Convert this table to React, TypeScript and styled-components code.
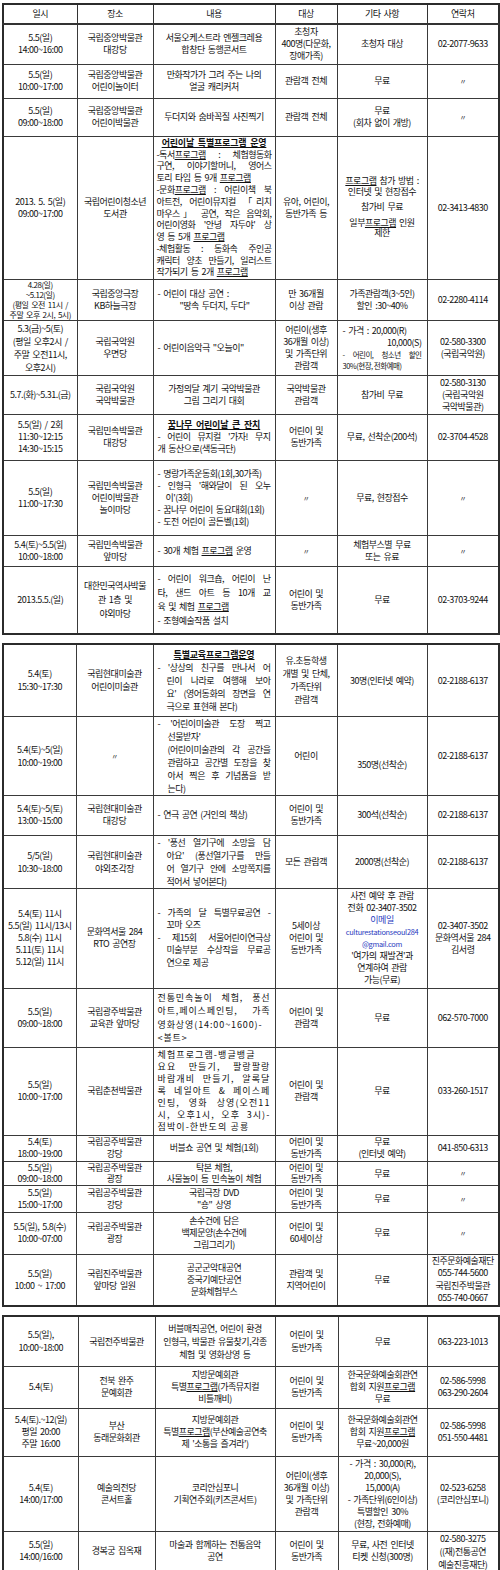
import React, { ReactNode } from "react";
import styled, { createGlobalStyle } from "styled-components";

const GlobalStyle = createGlobalStyle`
  html, body {
    margin: 0;
    padding: 0;
    background: #ffffff;
  }
`;

const Page = styled.div`
  width: 500px;
  box-sizing: border-box;
  padding: 3px 0 4px 2px;
  display: flex;
  flex-direction: column;
  gap: 8px;
  font-family: "Noto Sans CJK KR", "Noto Sans", sans-serif;
  color: #111;
`;

const Table = styled.table`
  width: 496px;
  table-layout: fixed;
  border-collapse: collapse;
  border: 2px solid #2b2b2b;
  font-size: 9px;
  letter-spacing: -0.5px;
  word-spacing: 1.5px;
`;

const Col = styled.col<{ $w: number }>`
  width: ${(p) => p.$w}px;
`;

const Tr = styled.tr<{ $h: number }>`
  height: ${(p) => p.$h}px;
`;

const Th = styled.th`
  border: 1px solid #333;
  border-bottom: 2px solid #333;
  font-weight: normal;
  line-height: 12px;
  padding: 0 2px;
`;

const Td = styled.td<{ $align: string; $lh: number; $pad: string; $ls?: number; $fs?: number }>`
  border: 1px solid #3a3a3a;
  padding: ${(p) => p.$pad};
  text-align: ${(p) => p.$align};
  vertical-align: middle;
  line-height: ${(p) => p.$lh}px;
  font-size: ${(p) => (p.$fs !== undefined ? `${p.$fs}px` : "inherit")};
  letter-spacing: ${(p) => (p.$ls !== undefined ? `${p.$ls}px` : "inherit")};
  word-spacing: ${(p) => (p.$ls !== undefined ? "0" : "inherit")};
  overflow: hidden;
`;

const Title = styled.span`
  display: block;
  font-weight: bold;
  text-decoration: underline;
  text-align: center;
  letter-spacing: -0.2px;
  word-spacing: 2px;
`;

const U = styled.span`
  text-decoration: underline;
`;

const J = styled.span<{ $in?: number }>`
  display: block;
  text-align: justify;
  text-align-last: justify;
  padding-left: ${(p) => p.$in ?? 0}px;
`;

const L = styled.span<{ $in?: number }>`
  display: block;
  text-align: left;
  padding-left: ${(p) => p.$in ?? 0}px;
`;

const R = styled.span`
  display: block;
  text-align: right;
`;

const Small = styled.span`
  display: block;
  font-size: 7.5px;
  line-height: 11px;
  word-spacing: 0;
`;

const Gap = styled.span`
  display: block;
  height: 5px;
`;

const Ditto = styled.span`
  font-size: 7px;
`;

const Mail = styled.span`
  color: #2a3cc0;
`;

const MailAddr = styled.span`
  font-size: 7.4px;
  letter-spacing: -0.3px;
`;

type CellSpec =
  | string
  | {
      t: ReactNode;
      a?: "left" | "center" | "justify";
      lh?: number;
      pad?: string;
      ls?: number;
      fs?: number;
    };

type RowSpec = { h: number; lh?: number; cells: CellSpec[] };

const br = (s: string) =>
  s.split("\n").map((l, i) => (
    <React.Fragment key={i}>
      {i > 0 && <br />}
      {l}
    </React.Fragment>
  ));

const D: CellSpec = { t: <Ditto>〃</Ditto> };

const headers = ["일시", "장소", "내용", "대상", "기타 사항", "연락처"];

const table1: RowSpec[] = [
  {
    h: 40,
    cells: [
      "5.5(일)\n14:00~16:00",
      "국립중앙박물관\n대강당",
      "서울오케스트라 엔젤크레용\n합창단 동행콘서트",
      "초청자\n400명(다문화,\n장애가족)",
      "초청자 대상",
      "02-2077-9633",
    ],
  },
  {
    h: 34,
    cells: [
      "5.5(일)\n10:00~17:00",
      "국립중앙박물관\n어린이놀이터",
      "만화작가가 그려 주는 나의\n얼굴 캐리커처",
      "관람객 전체",
      "무료",
      D,
    ],
  },
  {
    h: 38,
    cells: [
      "5.5(일)\n09:00~18:00",
      "국립중앙박물관\n어린이박물관",
      "두더지와 숨바꼭질 사진찍기",
      "관람객 전체",
      "무료\n(회차 없이 개방)",
      D,
    ],
  },
  {
    h: 143,
    cells: [
      "2013. 5. 5(일)\n09:00~17:00",
      "국립어린이청소년\n도서관",
      {
        lh: 11.8,
        pad: "0 3px",
        t: (
          <>
            <Title>어린이날 특별프로그램 운영</Title>
            <J>-독서<U>프로그램</U> : 체험형동화</J>
            <J>구연, 이야기할머니, 영어스</J>
            <L>토리 타임 등 9개 <U>프로그램</U></L>
            <J>-문화<U>프로그램</U> : 어린이책 북</J>
            <J>아트전, 어린이뮤지컬 「리치</J>
            <J>마우스」 공연, 작은 음악회,</J>
            <J>어린이영화 '안녕 자두야' 상</J>
            <L>영 등 5개 <U>프로그램</U></L>
            <J>-체험활동 : 동화속 주인공</J>
            <J>캐릭터 양초 만들기, 일러스트</J>
            <L>작가되기 등 2개 <U>프로그램</U></L>
          </>
        ),
      },
      "유아, 어린이,\n동반가족 등",
      {
        lh: 10.5,
        t: (
          <>
            <U>프로그램</U> 참가 방법 :<br />
            인터넷 및 현장접수
            <Gap />
            참가비 무료
            <Gap />
            일부<U>프로그램</U> 인원
            <br />
            제한
          </>
        ),
      },
      "02-3413-4830",
    ],
  },
  {
    h: 40,
    cells: [
      {
        t: "4.28(일)\n~5.12(일)\n(평일 오전 11시 /\n주말 오후 2시, 5시)",
        lh: 10,
        fs: 8,
        pad: "0 1px",
      },
      "국립중앙극장\nKB하늘극장",
      {
        a: "left",
        pad: "0 4px",
        t: (
          <>
            <L>- 어린이 대상 공연 :</L>
            <L $in={22}>"땅속 두더지, 두다"</L>
          </>
        ),
      },
      "만 36개월\n이상 관람",
      "가족관람객(3~5인)\n할인 :30~40%",
      "02-2280-4114",
    ],
  },
  {
    h: 55,
    cells: [
      { t: "5.3(금)~5(토)\n(평일 오후2시 /\n주말 오전11시,\n오후2시)", lh: 13 },
      "국립국악원\n우면당",
      { t: '- 어린이음악극 "오늘이"', a: "left", pad: "0 4px" },
      "어린이(생후\n36개월 이상)\n및 가족단위\n관람객",
      {
        a: "left",
        pad: "0 5px",
        t: (
          <>
            <L>- 가격 : 20,000(R)</L>
            <R>10,000(S)</R>
            <Small>
              <J>- 어린이, 청소년 할인</J>
              <L>30%(현장, 전화예매)</L>
            </Small>
          </>
        ),
      },
      "02-580-3300\n(국립국악원)",
    ],
  },
  {
    h: 39,
    cells: [
      "5.7.(화)~5.31.(금)",
      "국립국악원\n국악박물관",
      "가정의달 계기 국악박물관\n그림 그리기 대회",
      "국악박물관\n관람객",
      "참가비 무료",
      "02-580-3130\n(국립국악원\n국악박물관)",
    ],
  },
  {
    h: 46,
    cells: [
      "5.5(일) / 2회\n11:30~12:15\n14:30~15:15",
      "국립민속박물관\n대강당",
      {
        pad: "0 4px",
        t: (
          <>
            <Title>꿈나무 어린이날 큰 잔치</Title>
            <J>- 어린이 뮤지컬 '가자! 무지</J>
            <L>개 동산으로(색동극단)</L>
          </>
        ),
      },
      "어린이 및\n동반가족",
      "무료, 선착순(200석)",
      "02-3704-4528",
    ],
  },
  {
    h: 75,
    cells: [
      "5.5(일)\n11:00~17:30",
      "국립민속박물관\n어린이박물관\n놀이마당",
      {
        pad: "0 4px",
        t: (
          <>
            <L>- 명랑가족운동회(1회,30가족)</L>
            <J>- 인형극 '해와달이 된 오누</J>
            <L $in={8}>이'(3회)</L>
            <L>- 꿈나무 어린이 동요대회(1회)</L>
            <L>- 도전 어린이 골든벨(1회)</L>
          </>
        ),
      },
      D,
      "무료, 현장접수",
      D,
    ],
  },
  {
    h: 31,
    cells: [
      "5.4(토)~5.5(일)\n10:00~18:00",
      "국립민속박물관\n앞마당",
      {
        a: "left",
        pad: "0 4px",
        t: (
          <>
            - 30개 체험 <U>프로그램</U> 운영
          </>
        ),
      },
      D,
      "체험부스별 무료\n또는 유료",
      D,
    ],
  },
  {
    h: 68,
    cells: [
      "2013.5.5.(일)",
      { t: "대한민국역사박물\n관 1층 및\n야외마당", lh: 14 },
      {
        lh: 14,
        pad: "0 4px",
        t: (
          <>
            <J>- 어린이 워크숍, 어린이 난</J>
            <J>타, 샌드 아트 등 10개 교</J>
            <L>
              육 및 체험 <U>프로그램</U>
            </L>
            <L>- 조형예술작품 설치</L>
          </>
        ),
      },
      "어린이 및\n동반가족",
      "무료",
      "02-3703-9244",
    ],
  },
];

const table2: RowSpec[] = [
  {
    h: 72,
    lh: 13,
    cells: [
      "5.4(토)\n15:30~17:30",
      "국립현대미술관\n어린이미술관",
      {
        pad: "0 4px",
        t: (
          <>
            <Title>특별교육프로그램운영</Title>
            <J>- '상상의 친구를 만나서 어</J>
            <J $in={9}>린이 나라로 여행해 보아</J>
            <J $in={9}>요' (영어동화의 장면을 연</J>
            <L $in={9}>극으로 표현해 본다)</L>
          </>
        ),
      },
      "유.초등학생\n개별 및 단체,\n가족단위\n관람객",
      "30명(인터넷 예약)",
      "02-2188-6137",
    ],
  },
  {
    h: 78,
    lh: 13,
    cells: [
      "5.4(토)~5(일)\n10:00~19:00",
      D,
      {
        pad: "0 4px",
        t: (
          <>
            <J>- '어린이미술관 도장 찍고</J>
            <L $in={10}>선물받자'</L>
            <J $in={10}>(어린이미술관의 각 공간을</J>
            <J $in={10}>관람하고 공간별 도장을 찾</J>
            <J $in={10}>아서 찍은 후 기념품을 받</J>
            <L $in={10}>는다)</L>
          </>
        ),
      },
      "어린이",
      { t: "350명(선착순)", pad: "18px 2px 0" },
      "02-2188-6137",
    ],
  },
  {
    h: 40,
    cells: [
      "5.4(토)~5(토)\n13:00~15:00",
      "국립현대미술관\n대강당",
      { t: "- 연극 공연 (거인의 책상)", a: "left", pad: "0 4px" },
      "어린이 및\n동반가족",
      "300석(선착순)",
      "02-2188-6137",
    ],
  },
  {
    h: 52,
    lh: 13,
    cells: [
      "5/5(일)\n10:30~18:00",
      "국립현대미술관\n야외조각장",
      {
        pad: "0 4px",
        t: (
          <>
            <J>- '풍선 열기구에 소망을 담</J>
            <J $in={9}>아요' (풍선열기구를 만들</J>
            <J $in={9}>어 열기구 안에 소망쪽지를</J>
            <L $in={9}>적어서 넣어본다)</L>
          </>
        ),
      },
      "모든 관람객",
      "2000명(선착순)",
      "02-2188-6137",
    ],
  },
  {
    h: 100,
    cells: [
      "5.4(토) 11시\n5.5(일) 11시/13시\n5.8(수) 11시\n5.11(토) 11시\n5.12(일) 11시",
      "문화역서울 284\nRTO 공연장",
      {
        lh: 12.5,
        pad: "0 4px",
        t: (
          <>
            <J>- 가족의 달 특별무료공연 -</J>
            <L $in={9}>꼬마 오즈</L>
            <J>- 제15회 서울어린이연극상</J>
            <J $in={9}>미술부분 수상작을 무료공</J>
            <L $in={9}>연으로 제공</L>
          </>
        ),
      },
      "5세이상\n어린이 및\n동반가족",
      {
        t: (
          <>
            사전 예약 후 관람
            <br />
            전화 02-3407-3502
            <br />
            <Mail>
              이메일
              <br />
              <MailAddr>
                culturestationseoul284
                <br />
                @gmail.com
              </MailAddr>
            </Mail>
            <br />
            '여가의 재발견'과
            <br />
            연계하여 관람
            <br />
            가능(무료)
          </>
        ),
      },
      "02-3407-3502\n문화역서울 284\n김서령",
    ],
  },
  {
    h: 59,
    cells: [
      "5.5(일)\n09:00~18:00",
      "국립광주박물관\n교육관 앞마당",
      {
        lh: 13.5,
        ls: 0.9,
        pad: "0 4px",
        t: (
          <>
            <J>전통민속놀이 체험, 풍선</J>
            <J>아트,페이스페인팅, 가족</J>
            <J>영화상영(14:00~1600)-</J>
            <L>&lt;볼트&gt;</L>
          </>
        ),
      },
      "어린이 및\n관람객",
      "무료",
      "062-570-7000",
    ],
  },
  {
    h: 88,
    cells: [
      "5.5(일)\n10:00~17:00",
      "국립춘천박물관",
      {
        lh: 12,
        ls: 1.1,
        pad: "0 4px",
        t: (
          <>
            <J>체험프로그램-뱅글뱅글</J>
            <J>요요 만들기, 팔랑팔랑</J>
            <J>바람개비 만들기, 알록달</J>
            <J>록 네일아트 &amp; 페이스페</J>
            <J>인팅, 영화 상영(오전11</J>
            <J>시, 오후1시, 오후 3시)-</J>
            <L>점박이-한반도의 공룡</L>
          </>
        ),
      },
      "어린이 및\n관람객",
      "무료",
      "033-260-1517",
    ],
  },
  {
    h: 26,
    cells: [
      "5.4(토)\n18:00~19:00",
      "국립공주박물관\n강당",
      "버블쇼 공연 및 체험(1회)",
      "어린이 및\n동반가족",
      "무료\n(인터넷 예약)",
      "041-850-6313",
    ],
  },
  {
    h: 24,
    lh: 11,
    cells: [
      "5.5(일)\n09:00~18:00",
      "국립공주박물관\n광장",
      "탁본 체험,\n사물놀이 등 민속놀이 체험",
      "어린이 및\n동반가족",
      "무료",
      D,
    ],
  },
  {
    h: 27,
    cells: [
      "5.5(일)\n15:00~17:00",
      "국립공주박물관\n강당",
      '국립극장 DVD\n"숑" 상영',
      "어린이 및\n동반가족",
      "무료",
      D,
    ],
  },
  {
    h: 42,
    cells: [
      "5.5(일), 5.8(수)\n10:00~07:00",
      "국립공주박물관\n광장",
      "손수건에 담은\n백제문양(손수건에\n그림그리기)",
      "어린이 및\n60세이상",
      "무료",
      D,
    ],
  },
  {
    h: 52,
    cells: [
      "5.5(일)\n10:00 ~ 17:00",
      "국립진주박물관\n앞마당 일원",
      "공군군악대공연\n중국기예단공연\n문화체험부스",
      "관람객 및\n지역어린이",
      "무료",
      { t: "진주문화예술재단\n055-744-5600\n국립진주박물관\n055-740-0667", lh: 12.5 },
    ],
  },
];

const table3: RowSpec[] = [
  {
    h: 50,
    lh: 13,
    cells: [
      "5.5(일),\n10:00~18:00",
      "국립전주박물관",
      "버블매직공연, 어린이 환경\n인형극, 박물관 유물찾기,각종\n체험 및 영화상영 등",
      "어린이 및\n동반가족",
      "무료",
      "063-223-1013",
    ],
  },
  {
    h: 42,
    cells: [
      "5.4(토)",
      "전북 완주\n문예회관",
      {
        t: (
          <>
            지방문예회관
            <br />
            특별<U>프로그램</U>(가족뮤지컬
            <br />
            비틀깨비)
          </>
        ),
      },
      "어린이 및\n동반가족",
      {
        t: (
          <>
            한국문화예술회관연
            <br />
            합회 지원<U>프로그램</U>
            <br />
            무료
          </>
        ),
      },
      "02-586-5998\n063-290-2604",
    ],
  },
  {
    h: 48,
    cells: [
      "5.4(토).~12(일)\n평일 20:00\n주말 16:00",
      "부산\n동래문화회관",
      {
        pad: "0 1px",
        t: (
          <>
            지방문예회관
            <br />
            특별<U>프로그램</U>(부산예술공연축
            <br />제 '소통을 즐겨라')
          </>
        ),
      },
      "어린이 및\n동반가족",
      {
        t: (
          <>
            한국문화예술회관연
            <br />
            합회 지원<U>프로그램</U>
            <br />
            무료~20,000원
          </>
        ),
      },
      "02-586-5998\n051-550-4481",
    ],
  },
  {
    h: 75,
    cells: [
      "5.4(토)\n14:00/17:00",
      "예술의전당\n콘서트홀",
      "코리안심포니\n기획연주회(키즈콘서트)",
      "어린이(생후\n36개월 이상)\n및 가족단위\n관람객",
      "- 가격 : 30,000(R),\n20,000(S),\n15,000(A)\n- 가족단위(6인이상)\n특별할인 30%\n(현장, 전화예매)",
      "02-523-6258\n(코리안심포니)",
    ],
  },
  {
    h: 41,
    cells: [
      "5.5(일)\n14:00/16:00",
      "경복궁 집옥재",
      "마술과 함께하는 전통음악\n공연",
      "어린이 및\n동반가족",
      "무료, 사전 인터넷\n티켓 신청(300명)",
      { t: "02-580-3275\n((재)전통공연\n예술진흥재단)", lh: 13 },
    ],
  },
];

const renderCell = (c: CellSpec, i: number, lh: number) => {
  const spec = typeof c === "string" ? { t: c } : c;
  const content = typeof spec.t === "string" ? br(spec.t) : spec.t;
  return (
    <Td
      key={i}
      $align={spec.a ?? "center"}
      $lh={spec.lh ?? lh}
      $pad={spec.pad ?? "0 2px"}
      $ls={spec.ls}
      $fs={spec.fs}
    >
      {content}
    </Td>
  );
};

const Schedule = ({
  rows,
  cols,
  withHeader,
}: {
  rows: RowSpec[];
  cols: number[];
  withHeader?: boolean;
}) => (
  <Table>
    <colgroup>
      {cols.map((w, i) => (
        <Col key={i} $w={w} />
      ))}
    </colgroup>
    <tbody>
      {withHeader && (
        <Tr $h={20}>
          {headers.map((h) => (
            <Th key={h}>{h}</Th>
          ))}
        </Tr>
      )}
      {rows.map((r, i) => (
        <Tr key={i} $h={r.h}>
          {r.cells.map((c, j) => renderCell(c, j, r.lh ?? 12))}
        </Tr>
      ))}
    </tbody>
  </Table>
);

const App = () => {
  return (
    <>
      <GlobalStyle />
      <Page>
        <Schedule rows={table1} cols={[74, 76, 122, 62, 90, 72]} withHeader />
        <Schedule rows={table2} cols={[73, 77, 122, 62, 90, 72]} />
        <Schedule rows={table3} cols={[75, 77, 120, 63, 89, 72]} />
      </Page>
    </>
  );
};

export default App;
